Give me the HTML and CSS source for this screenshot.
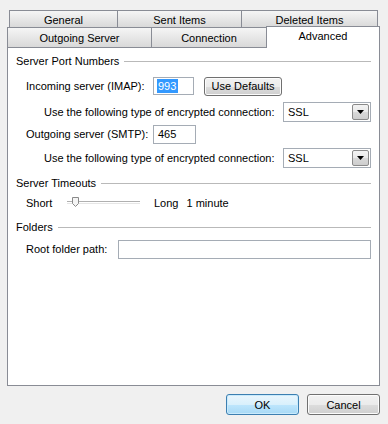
FILE: index.html
```html
<!DOCTYPE html>
<html>
<head>
<meta charset="utf-8">
<link rel="stylesheet" href="styles.css">
</head>
<body>
<div class="dialog">
  <div class="tabs">
    <div class="tab-row row1">
      <div class="tab w-general">General</div>
      <div class="tab w-sent">Sent Items</div>
      <div class="tab w-deleted">Deleted Items</div>
    </div>
    <div class="tab-row row2">
      <div class="tab w-outgoing">Outgoing Server</div>
      <div class="tab w-connection">Connection</div>
      <div class="tab tab-active w-advanced">Advanced</div>
    </div>
  </div>
  <div class="panel">
    <div class="group-head gh1"><span>Server Port Numbers</span><div class="rule"></div></div>
    <div class="row r-imap">
      <span class="lbl lbl-port">Incoming server (IMAP):</span>
      <div class="textbox tb-imap"><span class="sel">993</span></div>
      <div class="btn btn-defaults">Use Defaults</div>
    </div>
    <div class="row sub r-enc1">
      <span class="lbl lbl-enc">Use the following type of encrypted connection:</span>
      <div class="combo"><span class="combo-text">SSL</span><div class="combo-btn"><svg width="7" height="4" viewBox="0 0 7 4"><path d="M0 0H7L3.5 4Z" fill="#000"/></svg></div></div>
    </div>
    <div class="row r-smtp">
      <span class="lbl lbl-port">Outgoing server (SMTP):</span>
      <div class="textbox tb-smtp">465</div>
    </div>
    <div class="row sub r-enc2">
      <span class="lbl lbl-enc">Use the following type of encrypted connection:</span>
      <div class="combo"><span class="combo-text">SSL</span><div class="combo-btn"><svg width="7" height="4" viewBox="0 0 7 4"><path d="M0 0H7L3.5 4Z" fill="#000"/></svg></div></div>
    </div>
    <div class="group-head gh2"><span>Server Timeouts</span><div class="rule"></div></div>
    <div class="row r-short">
      <span class="lbl lbl-short">Short</span>
      <div class="slider">
        <div class="track"></div>
        <svg class="thumb" width="7" height="10" viewBox="0 0 7 10"><path d="M0.5 0.5H6.5V6.5L3.5 9.5L0.5 6.5Z" fill="#f4f4f4" stroke="#8a8a8a"/></svg>
      </div>
      <span class="lbl lbl-long">Long</span>
      <span class="lbl lbl-min">1 minute</span>
    </div>
    <div class="group-head gh3"><span>Folders</span><div class="rule"></div></div>
    <div class="row r-root">
      <span class="lbl lbl-root">Root folder path:</span>
      <div class="textbox tb-root"></div>
    </div>
  </div>
  <div class="footer">
    <div class="btn btn-ok">OK</div>
    <div class="btn btn-cancel">Cancel</div>
  </div>
</div>
</body>
</html>
```
FILE: styles.css
```css
html, body {
  margin: 0;
  padding: 0;
}
body {
  background: #f0f0f0;
  font-family: "Liberation Sans", Arial, sans-serif;
  font-size: 11px;
  color: #000;
  width: 388px;
  height: 424px;
  overflow: hidden;
}
.dialog {
  padding-top: 10px;
}
.tab-row {
  display: flex;
}
.row1 {
  margin-left: 9px;
  height: 17px;
}
.row2 {
  margin-left: 7px;
  height: 20px;
  align-items: flex-end;
}
.tab {
  box-sizing: border-box;
  border: 1px solid #898c95;
  border-bottom: none;
  background: linear-gradient(#f5f5f5, #d9d9d9);
  display: flex;
  justify-content: center;
  align-items: center;
  margin-left: -1px;
  white-space: nowrap;
}
.tab:first-child {
  margin-left: 0;
}
.row1 .tab {
  height: 17px;
  padding-top: 1px;
}
.row2 .tab {
  height: 20px;
  padding-top: 1px;
}
.w-general { width: 109px; }
.w-sent { width: 125px; }
.w-deleted { width: 137px; }
.w-outgoing { width: 145px; }
.w-connection { width: 116px; }
.row2 .tab-active {
  width: 114px;
  height: 22px;
  margin-bottom: -1px;
  background: #fff;
  position: relative;
  z-index: 1;
  padding-top: 0;
  padding-bottom: 3px;
}
.panel {
  box-sizing: border-box;
  margin-left: 7px;
  width: 373px;
  height: 339px;
  border: 1px solid #898c95;
  background: #fff;
  padding: 0 8px;
}
.group-head {
  display: flex;
  align-items: center;
  height: 14px;
  gap: 5px;
  white-space: nowrap;
}
.rule {
  flex: 1;
  height: 1px;
  background: #b9b9b9;
}
.gh1 { margin-top: 6px; }
.gh2 { margin-top: 8px; }
.gh3 { margin-top: 7px; }
.row {
  display: flex;
  align-items: center;
  height: 20px;
  padding-left: 10px;
  white-space: nowrap;
}
.row.sub {
  padding-left: 28px;
}
.r-imap { margin-top: 8px; }
.r-enc1 { margin-top: 6px; }
.r-smtp { margin-top: 2px; }
.r-enc2 { margin-top: 4px; }
.r-short { margin-top: 3px; }
.r-root { margin-top: 5px; }
.lbl-port { width: 127px; }
.lbl-enc { width: 239px; }
.lbl-short { width: 41px; }
.lbl-long { margin-left: 14px; }
.lbl-min { margin-left: 8px; }
.lbl-root { width: 92px; }
.textbox {
  box-sizing: border-box;
  height: 18px;
  border: 1px solid #a5acb5;
  background: #fff;
  display: flex;
  align-items: center;
  padding-left: 3px;
}
.tb-imap { width: 41px; }
.tb-smtp { width: 43px; height: 19px; padding-left: 4px; }
.tb-root { width: 253px; height: 19px; }
.sel {
  background: #3399ff;
  color: #fff;
  padding: 1px 2px 1px 1px;
  line-height: 12px;
}
.btn {
  box-sizing: border-box;
  border: 1px solid #707070;
  border-radius: 3px;
  background: linear-gradient(#f2f2f2 0%, #ebebeb 50%, #dddddd 50%, #cfcfcf 100%);
  display: flex;
  align-items: center;
  justify-content: center;
  box-shadow: inset 0 0 0 1px #fcfcfc;
}
.btn-defaults {
  margin-left: 10px;
  width: 78px;
  height: 19px;
}
.combo {
  box-sizing: border-box;
  width: 88px;
  height: 20px;
  border: 1px solid #a5acb5;
  background: #fff;
  display: flex;
  align-items: center;
  justify-content: space-between;
  padding: 0 1px 0 4px;
}
.combo-btn {
  box-sizing: border-box;
  width: 17px;
  height: 16px;
  border: 1px solid #8a8a8a;
  border-radius: 2px;
  background: linear-gradient(#f3f3f3 0%, #e9e9e9 50%, #d9d9d9 50%, #cdcdcd 100%);
  display: flex;
  align-items: center;
  justify-content: center;
}
.slider {
  position: relative;
  width: 73px;
  height: 12px;
}
.track {
  position: absolute;
  left: 0;
  right: 0;
  top: 4px;
  height: 1px;
  border-top: 1px solid #b0b0b0;
  border-bottom: 1px solid #e6e6e6;
}
.thumb {
  position: absolute;
  left: 5px;
  top: 0;
}
.footer {
  display: flex;
  justify-content: flex-end;
  gap: 8px;
  padding-right: 8px;
  margin-top: 8px;
}
.btn-ok,
.btn-cancel {
  width: 73px;
  height: 21px;
}
.btn-ok {
  border-color: #3c7fb1;
  background: linear-gradient(#eaf6fd 0%, #d9f0fc 50%, #bee6fd 50%, #a7d9f5 100%);
  box-shadow: inset 0 0 0 1px #c9eafc;
}
```
